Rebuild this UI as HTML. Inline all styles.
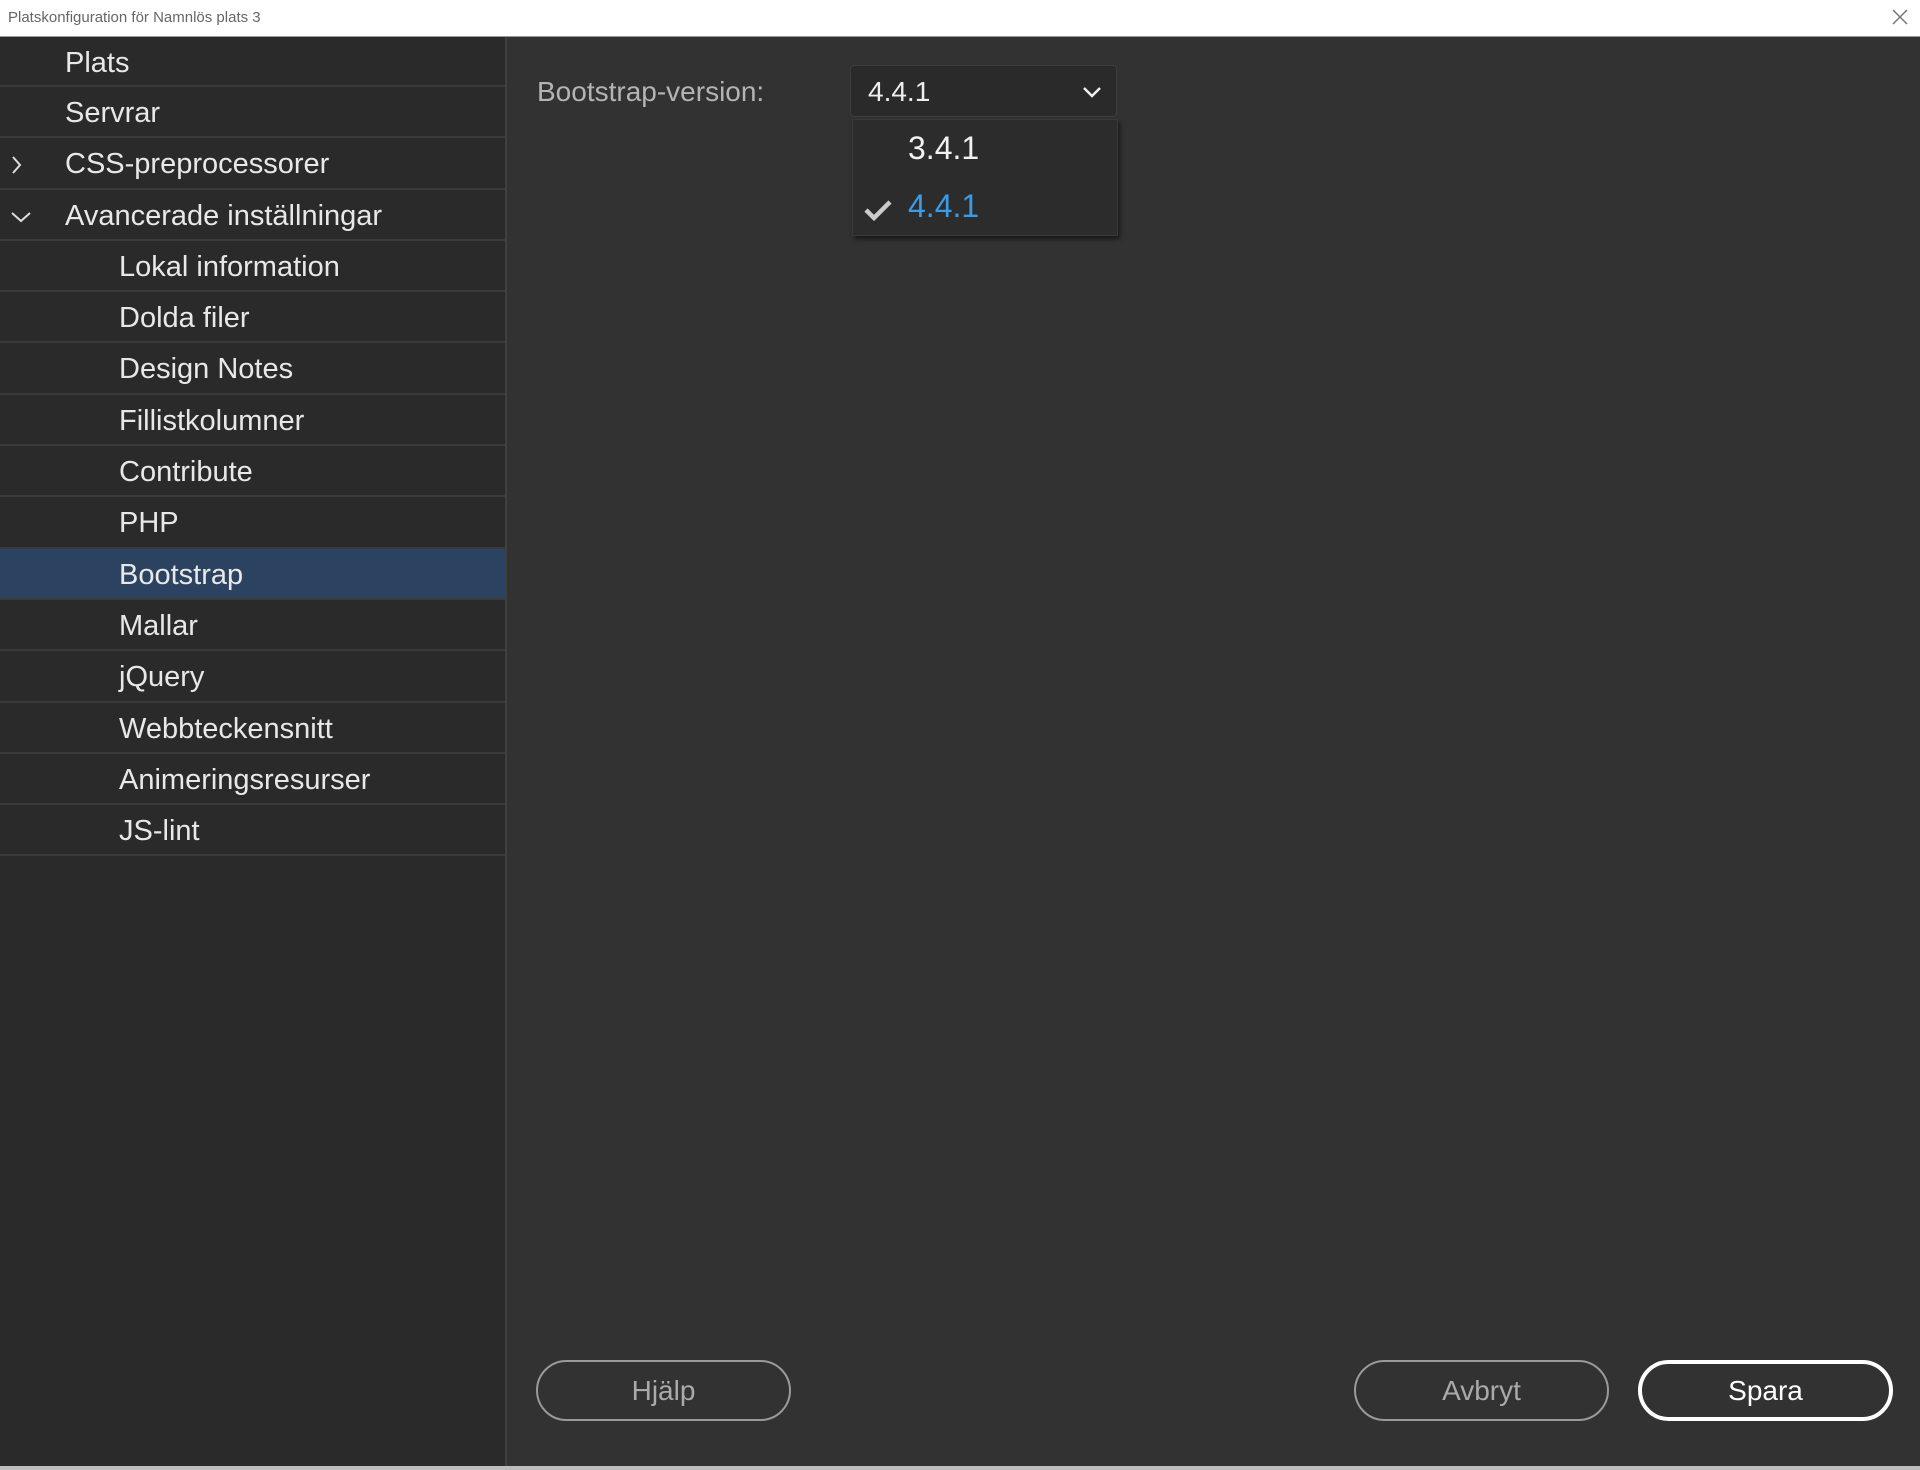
<!DOCTYPE html>
<html><head><meta charset="utf-8"><style>
*{margin:0;padding:0;box-sizing:border-box}
body{width:1920px;height:1470px;background:#323232;font-family:"Liberation Sans",sans-serif;position:relative;overflow:hidden}
.title{position:absolute;left:0;top:0;width:1920px;height:37px;background:#fff;border-bottom:1px solid #999}
.title span{position:absolute;left:8px;top:9px;font-size:15px;color:#666}
.side{position:absolute;left:0;top:37px;width:507px;height:1433px;background:#2a2a2a;border-right:2px solid #404040}
.row{height:51.3px;border-bottom:2px solid #3a3a3a;color:#e8e8e8;font-size:29px;line-height:52px;position:relative}
.row.l1{padding-left:65px}.row.l2{padding-left:119px}
.row.sel{background:#2b4360}
.chev{position:absolute;left:8px;top:17px}
.lbl{position:absolute;left:537px;top:76px;font-size:28px;color:#b4b4b4}
.dd{position:absolute;left:850px;top:65px;width:267px;height:52px;background:#2a2a2a;border:1px solid #3d3d3d;border-radius:4px;color:#eee;font-size:28px;padding:10px 17px}
.list{position:absolute;left:852px;top:119px;width:266px;height:117px;background:#2c2c2c;border:1px solid #3a3a3a;box-shadow:2px 3px 4px rgba(0,0,0,.5);font-size:32px}
.it{position:absolute;left:55px}
.btn{position:absolute;top:1360px;height:61px;width:255px;border:2px solid #9a9a9a;border-radius:31px;color:#aaa;font-size:28px;text-align:center;line-height:57px}
.btn.p{border:4px solid #fff;color:#fff;line-height:53px}
</style></head><body>
<div class="title"><span>Platskonfiguration för Namnlös plats 3</span>
<svg style="position:absolute;right:12px;top:9px" width="16" height="16" viewBox="0 0 16 16"><path d="M1 1l14 14M15 1L1 15" stroke="#777" stroke-width="1.5"/></svg></div>
<div class="side">
<div class="row l1" style="height:50px">Plats</div>
<div class="row l1">Servrar</div>
<div class="row l1"><svg class="chev" width="16" height="20" viewBox="0 0 16 20"><path d="M5 2l7 8-7 8" stroke="#ddd" stroke-width="2" fill="none"/></svg>CSS-preprocessorer</div>
<div class="row l1"><svg class="chev" style="left:10px;top:20px" width="22" height="14" viewBox="0 0 22 14"><path d="M2 3l9 8 9-8" stroke="#ddd" stroke-width="2" fill="none"/></svg>Avancerade inställningar</div>
<div class="row l2">Lokal information</div>
<div class="row l2">Dolda filer</div>
<div class="row l2">Design Notes</div>
<div class="row l2">Fillistkolumner</div>
<div class="row l2">Contribute</div>
<div class="row l2">PHP</div>
<div class="row l2 sel">Bootstrap</div>
<div class="row l2">Mallar</div>
<div class="row l2">jQuery</div>
<div class="row l2">Webbteckensnitt</div>
<div class="row l2">Animeringsresurser</div>
<div class="row l2">JS-lint</div>
</div>
<div class="lbl">Bootstrap-version:</div>
<div class="dd">4.4.1<svg style="position:absolute;right:14px;top:20px" width="20" height="12" viewBox="0 0 20 12"><path d="M2 2l8 8 8-8" stroke="#eee" stroke-width="2.5" fill="none"/></svg></div>
<div class="list">
<div class="it" style="top:10px;color:#f2f2f2">3.4.1</div>
<svg style="position:absolute;left:10px;top:78px" width="30" height="24" viewBox="0 0 30 24"><path d="M3 12l8 8L27 4" stroke="#ccc" stroke-width="4.5" fill="none"/></svg>
<div class="it" style="top:68px;color:#3a9be8">4.4.1</div>
</div>
<div class="btn" style="left:536px">Hjälp</div>
<div class="btn" style="left:1354px">Avbryt</div>
<div class="btn p" style="left:1638px">Spara</div>
<div style="position:absolute;left:0;top:1466px;width:1920px;height:4px;background:#bdbdbd"></div>
</body></html>
